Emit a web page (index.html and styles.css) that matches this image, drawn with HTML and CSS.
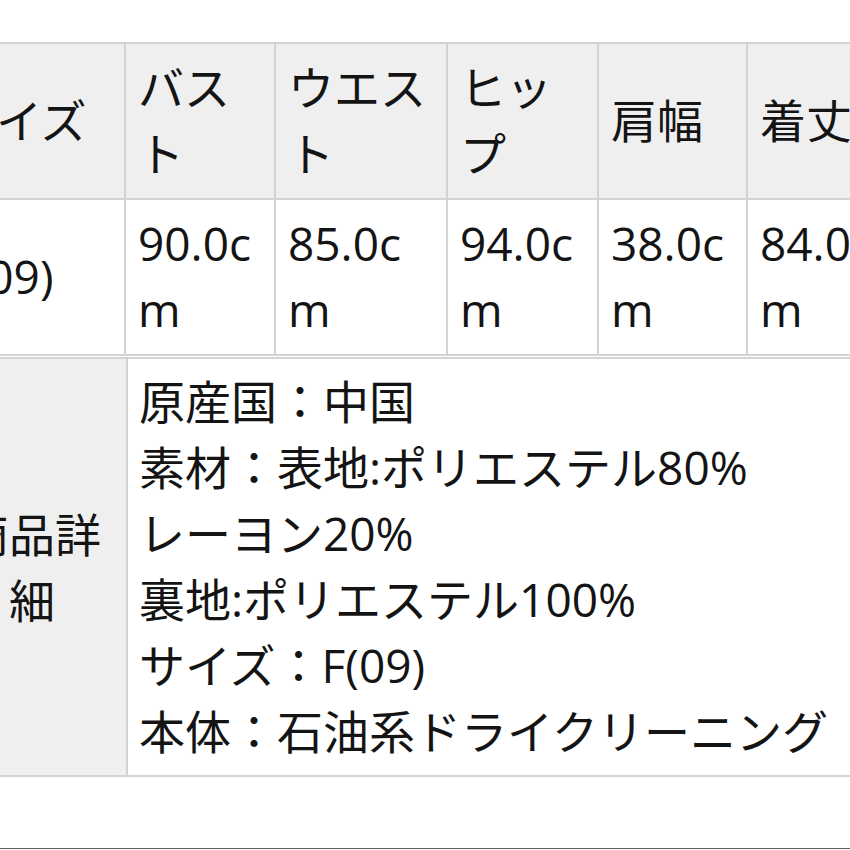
FILE: index.html
```html
<!DOCTYPE html>
<html lang="ja">
<head>
<meta charset="utf-8">
<link rel="stylesheet" href="styles.css">
</head>
<body>
<div class="page">
  <table class="spec size-table">
    <colgroup>
      <col class="c-label"><col class="c-bust"><col class="c-waist"><col class="c-hip"><col class="c-shoulder"><col class="c-length">
    </colgroup>
    <tr class="head">
      <td>サイズ</td>
      <td>バスト</td>
      <td>ウエスト</td>
      <td>ヒップ</td>
      <td>肩幅</td>
      <td>着丈</td>
    </tr>
    <tr>
      <td>F(09)</td>
      <td>90.0cm</td>
      <td>85.0cm</td>
      <td>94.0cm</td>
      <td>38.0cm</td>
      <td>84.0cm</td>
    </tr>
  </table>
  <table class="spec detail-table">
    <colgroup>
      <col class="d-label"><col class="d-body">
    </colgroup>
    <tr>
      <th>商品詳細</th>
      <td>原産国：中国<br>素材：表地:ポリエステル80%<br>レーヨン20%<br>裏地:ポリエステル100%<br>サイズ：F(09)<br>本体：石油系ドライクリーニング</td>
    </tr>
  </table>
</div>
</body>
</html>
```
FILE: styles.css
```css
html, body {
  margin: 0;
  padding: 0;
  background: #ffffff;
}
body {
  overflow: hidden;
}
.page {
  width: 850px;
  height: 849px;
  overflow: hidden;
  padding-top: 42px;
  box-sizing: border-box;
  border-bottom: 1px solid #5e5e5e;
  font-family: "Open Sans", "Noto Sans CJK JP", sans-serif;
  font-size: 46px;
  line-height: 66px;
  color: #141414;
}
.spec {
  border-collapse: collapse;
  table-layout: fixed;
  margin-left: -64px;
}
.spec td, .spec th {
  border: 2px solid #d3d3d3;
  vertical-align: middle;
  text-align: left;
  font-weight: normal;
  word-break: break-all;
}
.size-table {
  width: 958px;
}
.size-table td {
  padding: 10px 10px 12px 12px;
  height: 132px;
}
.size-table .head td {
  background: #efefef;
}
.c-label { width: 188px; }
.c-bust { width: 150px; }
.c-waist { width: 172px; }
.c-hip { width: 151px; }
.c-shoulder { width: 149px; }
.c-length { width: 148px; }

.detail-table {
  width: 1000px;
  margin-top: 1px;
}
.detail-table th {
  background: #efefef;
  text-align: center;
  padding: 10px 14px;
}
.detail-table td {
  padding: 9px 12px 11px 11px;
  white-space: nowrap;
}
.d-label { width: 190px; }
.d-body { width: 810px; }
```
